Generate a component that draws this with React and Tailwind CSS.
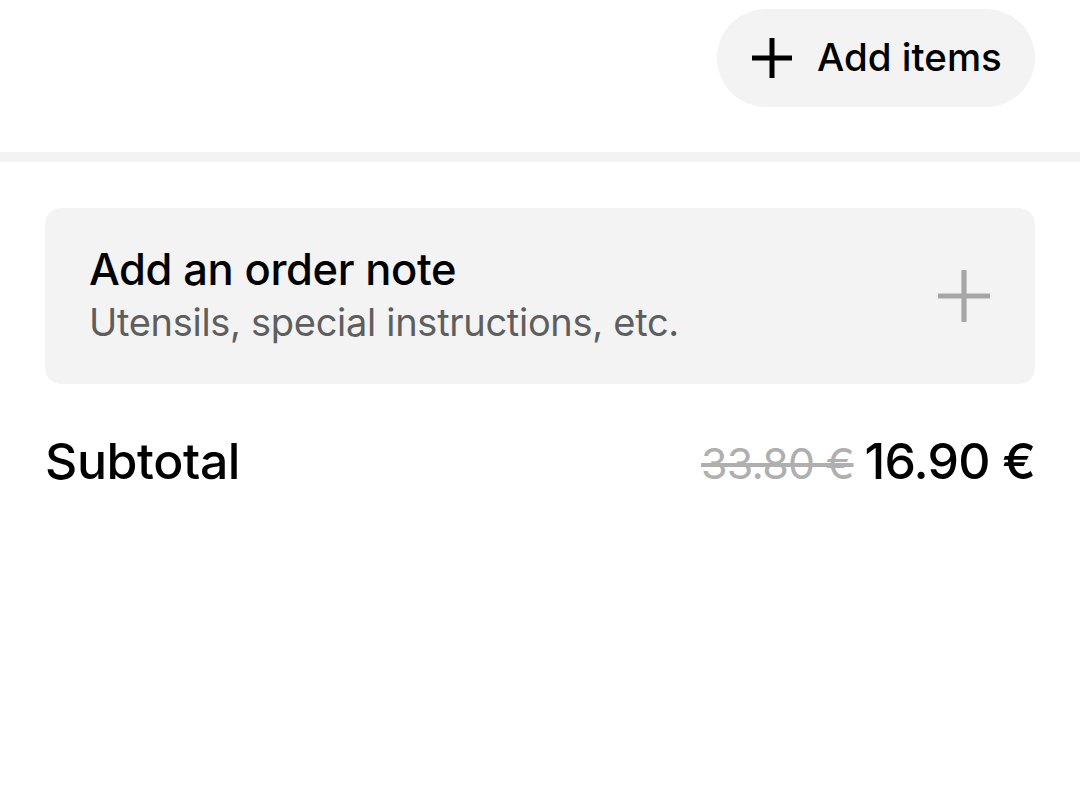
import React from "react";

const Plus = ({ className, stroke = 5 }) => (
  <svg viewBox="0 0 40 40" className={className} fill="none">
    <path d="M20 0v40M0 20h40" stroke="currentColor" strokeWidth={stroke} />
  </svg>
);

const App = () => {
  return (
    <div
      className="w-[1080px] h-[808px] bg-white text-black overflow-hidden"
      style={{ fontFamily: "Inter, 'Noto Sans', sans-serif" }}
    >
      <div className="flex justify-end px-[45px] pt-[9px]">
        <button className="h-[98px] w-[318px] rounded-full bg-[#f3f3f3] flex items-center pl-[35px] gap-[25px]">
          <Plus className="w-[40px] h-[40px]" stroke={5} />
          <span className="text-[38.5px] font-medium">Add items</span>
        </button>
      </div>

      <div className="mt-[45px] h-[10px] bg-[#f3f3f3]" />

      <div className="px-[45px] pt-[46px]">
        <div className="h-[176px] rounded-[16px] bg-[#f3f3f3] flex items-center justify-between pl-[44px] pr-[45px]">
          <div className="flex flex-col pt-[2px]">
            <span className="text-[43.5px] font-medium leading-[50px] tracking-[-0.4px]">
              Add an order note
            </span>
            <span className="text-[38px] text-[#5e5e5e] leading-[56px] tracking-[-0.3px]">
              Utensils, special instructions, etc.
            </span>
          </div>
          <Plus className="w-[52px] h-[52px] text-[#a6a6a6]" stroke={4} />
        </div>

        <div className="mt-[40px] flex items-center justify-between">
          <span className="text-[50px] font-medium tracking-[-0.4px]">Subtotal</span>
          <div className="flex items-baseline gap-[11px]">
            <span className="text-[43px] text-[#afafaf] line-through tracking-[-0.8px]">
              33.80 €
            </span>
            <span className="text-[50px] font-medium tracking-[-0.8px]">16.90 €</span>
          </div>
        </div>
      </div>
    </div>
  );
};

export default App;
